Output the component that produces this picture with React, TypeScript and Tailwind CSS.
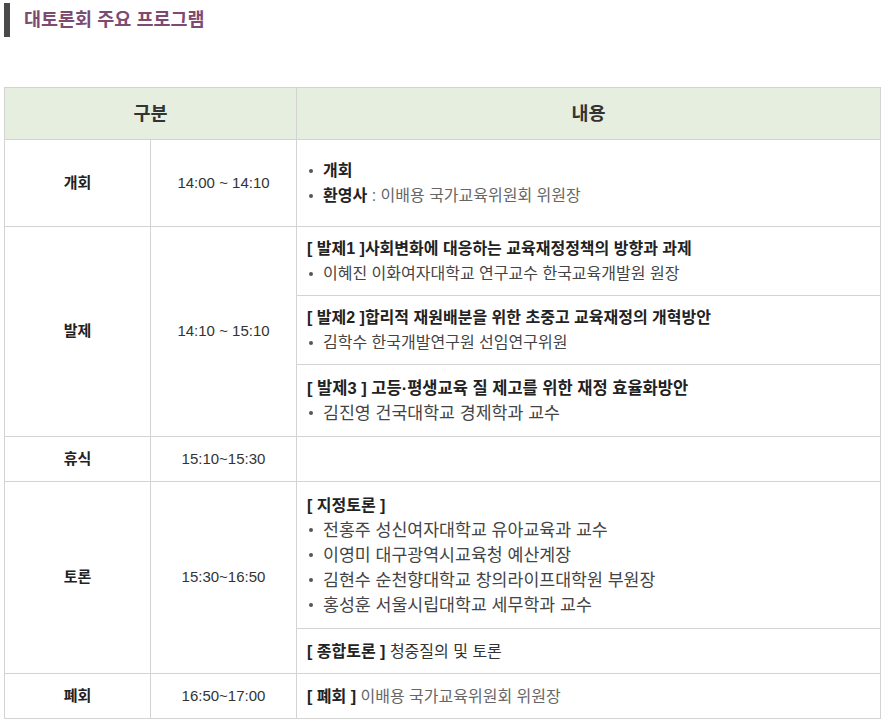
import React from "react";

const font = { fontFamily: '"Liberation Sans", "Noto Sans CJK KR", sans-serif' };

function Dot() {
  return (
    <span className="inline-block shrink-0 w-[4px] h-[4px] rounded-full bg-[#555] mr-[10px] ml-[2px]" />
  );
}

function Bullet({ children, big = false }: { children: React.ReactNode; big?: boolean }) {
  return (
    <div className={big ? "flex items-center text-[17.3px]" : "flex items-center"}>
      <Dot />
      <span>{children}</span>
    </div>
  );
}

const td = "border border-[#d3d3d3] align-middle";
const labelCell = `${td} text-center font-bold text-[15px] text-[#222]`;
const timeCell = `${td} text-center text-[15px] text-[#333]`;
const contentCell = `${td} px-[10px] py-[8px] text-[16px] leading-[25px] text-[#444]`;

export default function App() {
  return (
    <div className="bg-white w-[884px] h-[723px]" style={font}>
      <div className="flex items-center h-[34px] mt-[3px] ml-[4px]">
        <div className="w-[6px] h-[34px] bg-[#4a4a4a]" />
        <h2 className="ml-[14px] text-[18.5px] font-bold text-[#7d4b72] leading-none">
          대토론회 주요 프로그램
        </h2>
      </div>
      <table className="mt-[50px] ml-[4px] w-[877px] border-collapse table-fixed">
        <colgroup>
          <col className="w-[146px]" />
          <col className="w-[146px]" />
          <col />
        </colgroup>
        <thead>
          <tr className="h-[52px] bg-[#e6efdf]">
            <th colSpan={2} className={`${td} text-[18.5px] font-bold text-[#333]`}>구분</th>
            <th className={`${td} text-[18.5px] font-bold text-[#333]`}>내용</th>
          </tr>
        </thead>
        <tbody>
          <tr className="h-[87px]">
            <td className={labelCell}>개회</td>
            <td className={timeCell}>14:00 ~ 14:10</td>
            <td className={contentCell}>
              <Bullet><b className="text-[#222]">개회</b></Bullet>
              <Bullet><b className="text-[#222] font-semibold">환영사</b><span className="text-[#666]"> : 이배용 국가교육위원회 위원장</span></Bullet>
            </td>
          </tr>
          <tr className="h-[69px]">
            <td rowSpan={3} className={labelCell}>발제</td>
            <td rowSpan={3} className={timeCell}>14:10 ~ 15:10</td>
            <td className={contentCell}>
              <div className="font-bold text-[#222]">[ 발제1 ]사회변화에 대응하는 교육재정정책의 방향과 과제</div>
              <Bullet>이혜진 이화여자대학교 연구교수 한국교육개발원 원장</Bullet>
            </td>
          </tr>
          <tr className="h-[69px]">
            <td className={contentCell}>
              <div className="font-bold text-[#222]">[ 발제2 ]합리적 재원배분을 위한 초중고 교육재정의 개혁방안</div>
              <Bullet>김학수 한국개발연구원 선임연구위원</Bullet>
            </td>
          </tr>
          <tr className="h-[72px]">
            <td className={contentCell}>
              <div className="font-bold text-[#222] text-[16.5px]">[ 발제3 ] 고등·평생교육 질 제고를 위한 재정 효율화방안</div>
              <Bullet big>김진영 건국대학교 경제학과 교수</Bullet>
            </td>
          </tr>
          <tr className="h-[45px]">
            <td className={labelCell}>휴식</td>
            <td className={timeCell}>15:10~15:30</td>
            <td className={contentCell}></td>
          </tr>
          <tr className="h-[147px]">
            <td rowSpan={2} className={labelCell}>토론</td>
            <td rowSpan={2} className={timeCell}>15:30~16:50</td>
            <td className={contentCell}>
              <div className="font-bold text-[#222]">[ 지정토론 ]</div>
              <Bullet big>전홍주 성신여자대학교 유아교육과 교수</Bullet>
              <Bullet big>이영미 대구광역시교육청 예산계장</Bullet>
              <Bullet big>김현수 순천향대학교 창의라이프대학원 부원장</Bullet>
              <Bullet big>홍성훈 서울시립대학교 세무학과 교수</Bullet>
            </td>
          </tr>
          <tr className="h-[45px]">
            <td className={contentCell}>
              <span className="font-bold text-[#222]">[ 종합토론 ]</span><span className="text-[#333]"> 청중질의 및 토론</span>
            </td>
          </tr>
          <tr className="h-[45px]">
            <td className={labelCell}>폐회</td>
            <td className={timeCell}>16:50~17:00</td>
            <td className={contentCell}>
              <span className="font-bold text-[#222]">[ 폐회 ]</span><span className="text-[#666]"> 이배용 국가교육위원회 위원장</span>
            </td>
          </tr>
        </tbody>
      </table>
    </div>
  );
}
